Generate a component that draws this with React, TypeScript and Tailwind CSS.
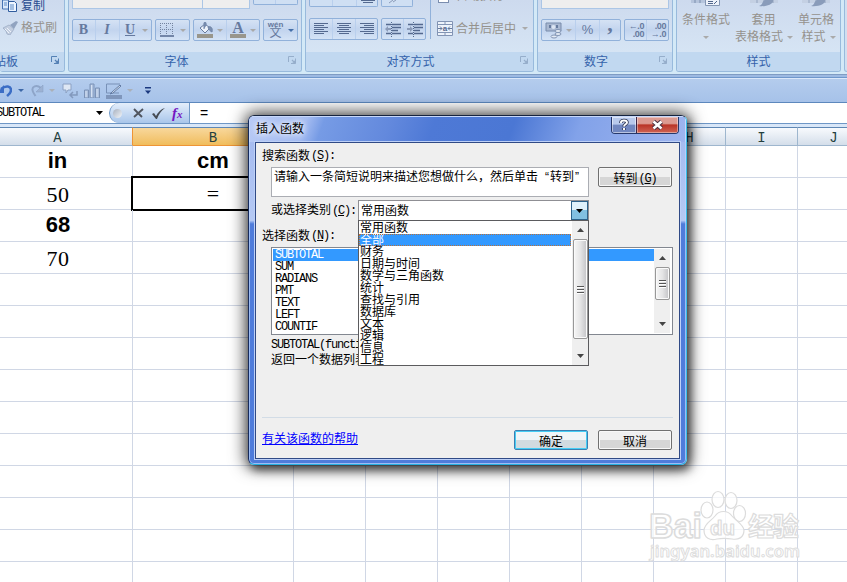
import React from "react";

const CJK = "font-['Liberation_Sans','Noto_Sans_CJK_SC',sans-serif]";
const MONO = "font-['Liberation_Mono',monospace] text-[12px] tracking-[-1.2px]";

function Caret({ className = "" }: { className?: string }) {
  return (
    <svg className={"h-[3px] w-[6px] shrink-0 " + className} viewBox="0 0 6 3">
      <path d="M0 0h6L3 3z" fill="currentColor" />
    </svg>
  );
}

function Launcher({ className }: { className: string }) {
  return (
    <svg className={"h-[9px] w-[9px] shrink-0 " + className} viewBox="0 0 9 9" fill="none" stroke="currentColor">
      <path d="M.5 6V.5H6" />
      <path d="M7.5 2.500V7.500H3" />
      <path d="M4 4l3 3M7 4.500V7H4.500" strokeWidth="1.200" />
    </svg>
  );
}

function Group({
  width,
  label,
  labelClass = "justify-center",
  launcher,
  launcherClass = "text-[#96aecb]",
  children,
}: {
  width: string;
  label: string;
  labelClass?: string;
  launcher?: boolean;
  launcherClass?: string;
  children?: React.ReactNode;
}) {
  return (
    <div className={"flex h-[72px] shrink-0 flex-col overflow-hidden rounded-b-[3px] border border-t-0 border-[#98badc] bg-linear-to-b from-[#cddaee] to-[#d9e8f6] " + width}>
      <div className="flex h-[52px] shrink-0 flex-col">{children}</div>
      <div className={"relative flex h-[19px] shrink-0 items-center bg-[#c1d8f0] pt-px text-[12px] leading-[18px] whitespace-nowrap text-[#3563ab] " + labelClass}>
        <span>{label}</span>
        {launcher && (
          <span className="absolute top-[4px] right-[4px]">
            <Launcher className={launcherClass} />
          </span>
        )}
      </div>
    </div>
  );
}

function Segs({ width, children }: { width: string; children: React.ReactNode }) {
  return (
    <div className={"flex h-[22px] shrink-0 divide-x divide-[#b9cfed] overflow-hidden rounded-[2px] border border-[#91b1da] bg-linear-to-b from-[#d5e2f4] via-[#c2d4ee] to-[#d4e3f6] text-[#66799e] " + width}>
      {children}
    </div>
  );
}

function Lines({ kind }: { kind: "left" | "center" | "right" }) {
  const widths = [14, 10, 14, 10, 14, 10];
  return (
    <svg className="h-[12px] w-[14px]" viewBox="0 0 14 12" stroke="#54698f">
      {widths.map((w, i) => {
        const x = kind === "left" ? 0 : kind === "center" ? (14 - w) / 2 : 14 - w;
        return <path key={i} d={`M${x} ${i * 2 + 0.5}h${w}`} />;
      })}
    </svg>
  );
}

function Indent({ out }: { out?: boolean }) {
  return (
    <svg className="h-[15px] w-[16px]" viewBox="0 0 16 15">
      <path d="M1 2.500h5M7 2.500h9M7 5.500h9M7 8.500h6M7 11.500h9M1 11.500h5" stroke="#54698f" strokeWidth="1.300" />
      <path d="M6.500 0v15" stroke="#54698f" strokeDasharray="1 1" />
      <path d={out ? "M0 7l3-3v2h3v2H3v2z" : "M6 7L3 4v2H0v2h3v2z"} fill="#8b9bb8" />
    </svg>
  );
}

function Ribbon() {
  return (
    <div className="flex h-[78px] shrink-0 flex-col bg-[#d3e9f7]">
      <div className="flex h-[74px] gap-[3px]">
        <Group width="w-[65px] border-l-0" label="贴板" labelClass="justify-start -ml-[6px]" launcher launcherClass="text-[#5481b5]">
          <div className="flex h-[16px] items-start pl-[7px] text-[12px] leading-[12px] text-[#294b8e]">
            <svg className="-ml-[5px] h-[13px] w-[16px]" viewBox="0 0 16 13">
              <path d="M.5 0h6v9h-6z" fill="#d9e8fb" stroke="#4774b4" />
              <path d="M6.500 1.500h6l2 2v8h-8z" fill="#edf5ff" stroke="#315d9e" />
              <path d="M2 3h3M2 5h3M8 5h4M8 7h4M8 9h4" stroke="#5c8ac5" />
            </svg>
            <span className="ml-[3px]">复制</span>
          </div>
          <div className="flex h-[24px] items-center pl-[3px] text-[12px] text-[#95928d]">
            <svg className="h-[14px] w-[16px]" viewBox="0 0 16 14">
              <path d="M0 7l6-3 5 4-4 6-3-1-1-3z" fill="#c3cee0" stroke="#98a8c2" strokeWidth=".7" />
              <path d="M7 4l6-4 2 1-4 7z" fill="#91a3c0" />
              <path d="M2 8l4 4M4 7l4 4" stroke="#eef3fa" />
            </svg>
            <span className="ml-[2px]">格式刷</span>
          </div>
        </Group>

        <Group width="w-[234px]" label="字体" labelClass="justify-center pr-[17px]" launcher>
          <div className="flex h-[19px] items-start pl-[3px]">
            <div className="h-[9px] w-[131px] border border-t-0 border-[#abc6e6] bg-[#eeeeee]" />
            <div className="h-[9px] w-[47px] border border-t-0 border-l-0 border-[#abc6e6] bg-[#eeeeee]" />
            <div className="ml-[3px] flex h-[5px] w-[45px] divide-x divide-[#b9cfed] rounded-b-[2px] border border-t-0 border-[#91b1da] bg-[#cfdff3]">
              <span className="w-[22px]" />
              <span />
            </div>
          </div>
          <div className="flex gap-[3px] pl-[3px] font-['Liberation_Serif',serif] text-[14px] leading-[20px] font-bold">
            <Segs width="w-[80px]">
              <span className="w-[23px] pr-px text-center">B</span>
              <span className="w-[24px] pr-px text-center italic">I</span>
              <span className="flex flex-1 items-center justify-between pr-[3px] pl-[5px]">
                <u>U</u>
                <Caret className="text-[#a9a9a9]" />
              </span>
            </Segs>
            <Segs width="w-[35px]">
              <span className="flex flex-1 items-center justify-between pr-[3px] pl-[4px]">
                <svg className="h-[14px] w-[14px]" viewBox="0 0 14 14">
                  <path d="M.5 0v12M6.500 0v12M12.500 0v12M0 .5h14M0 6.500h14" stroke="#73839f" strokeDasharray="1 1" />
                  <path d="M0 13h14" stroke="#54698f" strokeWidth="1.500" />
                </svg>
                <Caret className="text-[#a9a9a9]" />
              </span>
            </Segs>
            <Segs width="w-[67px]">
              <span className="flex w-[33px] items-center justify-between px-[3px]">
                <svg className="h-[16px] w-[17px]" viewBox="0 0 17 16">
                  <path d="M3 6l5-4 5 4-5 5z" fill="#edf2fa" stroke="#687b9d" />
                  <path d="M7 7V1c0-1 2-1 2 0v3M11 5c3-1 5 1 4 5-2-1-3-2-4-5" fill="#7b8fb1" stroke="#7185a7" />
                  <path d="M0 12h16v4H0z" fill="#99968c" />
                </svg>
                <Caret className="text-[#a9a9a9]" />
              </span>
              <span className="flex flex-1 items-center justify-between pr-[3px] pl-[3px]">
                <span className="flex w-[16px] flex-col items-center border-b-[4px] border-[#99968c] text-[16px] leading-[12px]">A</span>
                <Caret className="text-[#a9a9a9]" />
              </span>
            </Segs>
            <Segs width="w-[35px]">
              <span className="flex flex-1 items-center justify-between px-[3px]">
                <span className={"flex h-[18px] w-[17px] flex-col items-center text-[8px] leading-[7px] font-bold " + CJK}>
                  <span>wén</span>
                  <span className="text-[12px] leading-[11px] font-normal">文</span>
                </span>
                <Caret className="text-[#456fa9]" />
              </span>
            </Segs>
          </div>
        </Group>

        <Group width="w-[229px]" label="对齐方式" labelClass="justify-center pr-[18px]" launcher>
          <div className="flex h-[52px] pl-[3px]">
            <div className="flex w-[117px] flex-col">
              <div className="flex h-[18px] items-start gap-[3px]">
                <div className="flex h-[7px] w-[69px] divide-x divide-[#b9cfed] rounded-b-[2px] border border-t-0 border-[#91b1da] bg-[#cfdff3]">
                  <span className="w-[23px]" />
                  <span className="w-[24px]" />
                  <svg className="ml-[4px] h-[4px] w-[14px]" viewBox="0 0 14 4">
                    <path d="M0 .5h14M2 2.500h10" stroke="#54698f" />
                  </svg>
                </div>
                <div className="h-[7px] w-[32px] rounded-b-[2px] border border-t-0 border-[#91b1da] bg-[#cfdff3]">
                  <svg className="ml-[7px] h-[4px] w-[8px]" viewBox="0 0 8 4">
                    <path d="M0 3l4-3M4 2l3-2" stroke="#8b9bb8" />
                  </svg>
                </div>
              </div>
              <div className="flex gap-[3px]">
                <Segs width="w-[69px]">
                  <span className="flex w-[23px] items-center justify-center"><Lines kind="left" /></span>
                  <span className="flex w-[23px] items-center justify-center"><Lines kind="center" /></span>
                  <span className="flex flex-1 items-center justify-center"><Lines kind="right" /></span>
                </Segs>
                <Segs width="w-[45px]">
                  <span className="flex w-[22px] items-center justify-center"><Indent out /></span>
                  <span className="flex flex-1 items-center justify-center"><Indent /></span>
                </Segs>
              </div>
            </div>
            <div className="ml-[4px] h-[39px] w-px bg-[#91b1da]" />
            <div className="ml-[6px] flex flex-col text-[12px] text-[#95928d]">
              <div className="flex h-[19px] items-start">
                <div className="ml-[1px] h-[3px] w-[11px] border border-t-0 border-[#7a8dae] bg-white" />
                <span className="-mt-[10px] ml-[7px] leading-[12px]">自动换行</span>
              </div>
              <div className="flex h-[19px] items-center">
                <svg className="h-[15px] w-[16px]" viewBox="0 0 16 15">
                  <path d="M.5.5h15v14H.5z" fill="#edf3fb" stroke="#8294b4" />
                  <path d="M0 3.500h16M0 11.500h16M8 0v4M8 11v4" stroke="#8294b4" />
                  <path d="M1 7.500h4M11 7.500h4M3 5.500l2 2-2 2M13 5.500l-2 2 2 2" stroke="#667a9d" fill="none" />
                  <text x="8" y="10" textAnchor="middle" fontSize="8" fontFamily="Liberation Sans" fontWeight="bold" fill="#52678c">a</text>
                </svg>
                <span className="ml-[3px]">合并后居中</span>
                <Caret className="ml-[6px] text-[#aaa]" />
              </div>
            </div>
          </div>
        </Group>

        <Group width="w-[136px]" label="数字" labelClass="justify-center pr-[18px]" launcher>
          <div className="flex h-[19px] items-start pl-[3px]">
            <div className="h-[9px] w-[128px] border border-t-0 border-[#abc6e6] bg-[#eeeeee]" />
          </div>
          <div className="flex gap-[3px] pl-[3px]">
            <Segs width="w-[80px]">
              <span className="flex w-[34px] items-center justify-between px-[3px]">
                <svg className="h-[17px] w-[17px]" viewBox="0 0 17 17">
                  <path d="M1 1h15v8H1z" fill="#a9b8d1" stroke="#788cac" />
                  <path d="M4 3h2v3H4zM11 3h2v3h-2z" fill="#677b9e" />
                  <circle cx="8.500" cy="5" r="2" fill="#dce5f2" />
                  <ellipse cx="13" cy="9" rx="3" ry="1.500" fill="#e3eaf4" stroke="#8295b4" />
                  <ellipse cx="13" cy="12" rx="3" ry="1.500" fill="#e3eaf4" stroke="#8295b4" />
                  <ellipse cx="9" cy="14.500" rx="3" ry="1.500" fill="#e3eaf4" stroke="#8295b4" />
                </svg>
                <Caret className="text-[#aaa]" />
              </span>
              <span className="w-[24px] text-center text-[13px] leading-[20px]">%</span>
              <span className="flex-1 text-center font-['Liberation_Serif',serif] text-[22px] leading-[8px] font-bold">,</span>
            </Segs>
            <Segs width="w-[45px]">
              <span className="flex w-[22px] flex-col pt-[2px] pr-[2px] text-right text-[9px] leading-[8px] font-bold tracking-[-0.4px]">
                <span>←.0</span>
                <span>.00</span>
              </span>
              <span className="flex flex-1 flex-col pt-[2px] pr-[2px] text-right text-[9px] leading-[8px] font-bold tracking-[-0.4px]">
                <span>.00</span>
                <span>→.0</span>
              </span>
            </Segs>
          </div>
        </Group>

        <Group width="w-[165px]" label="样式">
          <div className="flex h-[52px] pl-[5px] text-center text-[12px] leading-[17px] whitespace-nowrap text-[#95928d]">
            <div className="flex w-[48px] flex-col items-center">
              <svg className="h-[12px] w-[30px]" viewBox="0 0 30 12">
                <path d="M0 0h14v3H0z" fill="#b5c4dc" />
                <path d="M4 0v3M9 0v3" stroke="#7b8fae" />
                <path d="M14.500-1h14v6.500h-14z" fill="#edf2fa" stroke="#8496b3" />
                <path d="M17 1.500h5M17 3.500h5M23 4l3-3" stroke="#52678c" />
              </svg>
              <span>条件格式</span>
              <Caret className="mt-[7px] text-[#aaa]" />
            </div>
            <div className="ml-[5px] flex w-[57px] flex-col items-center">
              <svg className="h-[12px] w-[30px]" viewBox="0 0 30 12">
                <path d="M1 0h28v3H1z" fill="#c4d0e3" />
                <path d="M8 0v3M15 0v3M24 0v3" stroke="#93a4bf" />
                <path d="M10 6c4-1 3-5 6-6h8c1 4-7 7-14 6z" fill="#8a9cba" />
              </svg>
              <span>套用</span>
              <span className="flex w-[57px] items-center gap-[4px]">表格格式<Caret className="text-[#aaa]" /></span>
            </div>
            <div className="ml-[3px] flex w-[42px] flex-col items-center">
              <svg className="h-[12px] w-[30px]" viewBox="0 0 30 12">
                <path d="M1 0h28v3H1z" fill="#c4d0e3" />
                <path d="M8 0v3M15 0v3M24 0v3" stroke="#93a4bf" />
                <path d="M10 6c4-1 3-5 6-6h8c1 4-7 7-14 6z" fill="#8a9cba" />
              </svg>
              <span>单元格</span>
              <span className="flex items-center gap-[4px] pl-[5px]">样式<Caret className="text-[#aaa]" /></span>
            </div>
          </div>
        </Group>
        <div className="h-[72px] w-[12px] shrink-0 rounded-b-[3px] border border-t-0 border-[#98badc] bg-[#d1dfef]" />
      </div>
      <div className="h-px bg-[#7f9cc3]" />
      <div className="h-[2px] bg-[#9dbae2]" />
      <div className="h-px bg-[#6f98cc]" />
    </div>
  );
}

function QuickAccess() {
  return (
    <div className="flex h-[25px] shrink-0 items-center border-t border-b border-t-[#dbe8fa] border-b-[#5d88bd] bg-linear-to-b from-[#b4cced] to-[#a6c2e9]">
      <svg className="h-[14px] w-[12px] shrink-0" viewBox="0 0 12 14">
        <path d="M1 5c5-4 10-3 10 1 0 3-2 4-4 6" fill="none" stroke="#3b6dc5" strokeWidth="2.500" />
        <path d="M4 1v8H-3z" fill="#3b6dc5" />
      </svg>
      <Caret className="ml-[6px] text-[#3d68a7]" />
      <svg className="ml-[7px] h-[13px] w-[13px] shrink-0" viewBox="0 0 13 13">
        <path d="M10 4C5 0 1 3 1.500 6c.3 3 2 4 3 6" fill="none" stroke="#8ea5c9" strokeWidth="2" />
        <path d="M12 1v7H5z" fill="#9db2d3" stroke="#879dc1" strokeWidth=".5" />
      </svg>
      <Caret className="ml-[5px] text-[#aab0b8]" />
      <svg className="ml-[7px] h-[16px] w-[16px] shrink-0" viewBox="0 0 16 16">
        <path d="M1 1h8v6H6l-2 3V7H1z" fill="#dee7f4" stroke="#8ca1c3" />
        <path d="M15 8v4H9M11 9l-3 3 3 3" fill="none" stroke="#8399bd" strokeWidth="1.500" />
      </svg>
      <svg className="ml-[6px] h-[15px] w-[16px] shrink-0" viewBox="0 0 16 15">
        <path d="M.5 7h4v8h-4zM6 1h4v14H6zM11.500 5h4v10h-4z" fill="#adc0de" stroke="#7b92b7" />
        <path d="M2 8v6M7.500 2v12M13 6v8" stroke="#d5e1f2" />
      </svg>
      <svg className="ml-[6px] h-[16px] w-[16px] shrink-0" viewBox="0 0 16 16">
        <path d="M14 1H.5v9H13" fill="none" stroke="#7891b7" />
        <path d="M14 2L6 9l-2 2 3-1 8-7z" fill="#dde6f3" stroke="#637ca4" />
        <path d="M0 12h16v4H0z" fill="#7f96bb" />
      </svg>
      <Caret className="ml-[5px] text-[#aab0b8]" />
      <svg className="ml-[12px] h-[7px] w-[6px] shrink-0" viewBox="0 0 6 7">
        <path d="M0 0h6v1.500H0zM0 3.500h6L3 7z" fill="#1b397f" />
      </svg>
    </div>
  );
}

function FormulaBar() {
  return (
    <div className="flex h-[21px] shrink-0 items-center overflow-hidden border-b border-[#6f97c6] bg-white">
      <span className={"-ml-[4px] w-[49px] text-black " + MONO}>SUBTOTAL</span>
      <svg className="ml-[51px] h-[4px] w-[7px]" viewBox="0 0 7 4"><path d="M0 0h7L3.500 4z" /></svg>
      <div className="ml-[6px] flex h-[20px] w-[81px] items-center rounded-l-full border border-y-0 border-[#7098c7] bg-linear-to-b from-[#e4eefb] to-[#a9c6ea]">
        <span className="ml-[3px] h-[9px] w-[9px] rounded-full bg-linear-to-br from-[#a8b1bf] to-[#f3f6fa]" />
        <svg className="ml-[11px] h-[10px] w-[11px]" viewBox="0 0 11 10">
          <path d="M1 1l8 8M10 1L1 9" stroke="#50555f" strokeWidth="1.900" />
        </svg>
        <svg className="ml-[8px] h-[11px] w-[13px]" viewBox="0 0 13 11">
          <path d="M0 6l2-1 2 3c2-4 5-7 9-8-4 3-6 6-8 11H4z" fill="#454b54" />
        </svg>
        <span className="ml-[7px] font-['Liberation_Serif',serif] text-[15px] leading-[18px] font-bold text-[#7516c1] italic">
          f<span className="text-[11px]">x</span>
        </span>
      </div>
      <span className="ml-[10px] text-[14px] leading-[19px]">=</span>
    </div>
  );
}

const columns = [
  { name: "A", w: "w-[133px]" },
  { name: "B", w: "w-[161px]" },
  { name: "C", w: "w-[72px]" },
  { name: "D", w: "w-[72px]" },
  { name: "E", w: "w-[72px]" },
  { name: "F", w: "w-[72px]" },
  { name: "G", w: "w-[72px]" },
  { name: "H", w: "w-[72px]" },
  { name: "I", w: "w-[72px]" },
  { name: "J", w: "w-[72px]" },
];

const cells: Record<string, { text: string; cls: string }> = {
  "0A": { text: "in", cls: "font-['Liberation_Sans',sans-serif] font-bold pr-[17px] pb-px" },
  "0B": { text: "cm", cls: "font-['Liberation_Sans',sans-serif] font-bold pb-px" },
  "1A": { text: "50", cls: "font-['Liberation_Serif',serif] pr-[16px] pt-[3px] tracking-[0.6px]" },
  "1B": { text: "=", cls: "font-['Liberation_Serif',serif]" },
  "2A": { text: "68", cls: "font-['Liberation_Sans',sans-serif] font-bold pr-[16px] pb-px" },
  "3A": { text: "70", cls: "font-['Liberation_Serif',serif] pr-[16px] pt-[3px] tracking-[0.6px]" },
};

function Sheet() {
  return (
    <div className="flex flex-col">
      <div className="flex h-[22px] w-[870px] shrink-0 border-t-[3px] border-[#d9e7f8] font-['Liberation_Mono',monospace] text-[14px] text-[#24403f]">
        {columns.map((c) => (
          <div
            key={c.name}
            className={
              "flex h-[19px] shrink-0 items-center justify-center border-t border-r border-b border-t-[#5f87b4] pt-[3px] leading-[14px] " +
              c.w +
              (c.name === "A" ? " pr-[17px] border-r-[#ee9436] border-b-[#9eb6ce] bg-linear-to-b from-[#f8fafd] to-[#d4deea]" : "") +
              (c.name === "B" ? " border-r-[#ee9436] border-b-[#ee9436] bg-linear-to-b from-[#f8d79b] to-[#f0bd5b]" : "") +
              (c.name !== "A" && c.name !== "B" ? " border-r-[#9eb6ce] border-b-[#9eb6ce] bg-linear-to-b from-[#f8fafd] to-[#d4deea]" : "")
            }
          >
            {c.name}
          </div>
        ))}
      </div>
      {Array.from({ length: 14 }, (_, r) => (
        <div key={r} className="flex h-[32px] w-[870px] shrink-0">
          {columns.map((c) => {
            const cell = cells[r + c.name];
            return (
              <div key={c.name} className={"relative shrink-0 border-r border-b border-[#d0d7e5] " + c.w}>
                {cell && (
                  <div className={"flex h-[31px] items-center justify-center text-[22px] leading-[22px] text-black " + cell.cls}>{cell.text}</div>
                )}
                {r === 1 && c.name === "B" && <div className="absolute -top-[2px] -right-[2px] -bottom-[2px] -left-[2px] border-2 border-black" />}
              </div>
            );
          })}
        </div>
      ))}
    </div>
  );
}

function Key({ k, colon }: { k: string; colon?: boolean }) {
  return (
    <span className={"ml-px " + MONO}>
      (<u>{k}</u>){colon && ":"}
    </span>
  );
}

function Button({ children, primary }: { children: React.ReactNode; primary?: boolean }) {
  return (
    <div
      className={
        "mr-px flex h-[20px] w-[74px] shrink-0 items-center justify-center rounded-[2px] border pt-[3px] text-[12px] leading-[12px] " +
        (primary
          ? "border-[#3c7fb1] bg-linear-to-b from-[#eff5f8] from-50% to-[#d2dbe0] to-50% shadow-[inset_0_0_0_1px_#45cdf5]"
          : "border-[#707070] bg-linear-to-b from-[#f0f0f0] from-50% to-[#d6d6d6] to-50% shadow-[inset_0_0_0_1px_#f8f8f8]")
      }
    >
      {children}
    </div>
  );
}

function ScrollBar({ thumb }: { thumb: string }) {
  return (
    <div className="flex w-[16px] shrink-0 flex-col items-center bg-[#efefef] py-[7px]">
      <svg className="h-[4px] w-[7px] shrink-0" viewBox="0 0 7 4"><path d="M0 4h7L3.500 0z" fill="#444" /></svg>
      <div className={"mt-[7px] flex w-[15px] shrink-0 items-center justify-center rounded-[2px] border border-[#989898] bg-linear-to-r from-[#f6f6f6] via-[#e4e4e5] to-[#c3c3c6] shadow-[inset_0_0_0_1px_#fafafa] " + thumb}>
        <svg className="h-[9px] w-[7px]" viewBox="0 0 7 9">
          <path d="M0 1.500h7M0 4.500h7M0 7.500h7" stroke="#555" />
          <path d="M0 2.500h7M0 5.500h7M0 8.500h7" stroke="#fff" />
        </svg>
      </div>
      <span className="flex-1" />
      <svg className="h-[4px] w-[7px] shrink-0" viewBox="0 0 7 4"><path d="M0 0h7L3.500 4z" fill="#444" /></svg>
    </div>
  );
}

const functions = ["SUBTOTAL", "SUM", "RADIANS", "PMT", "TEXT", "LEFT", "COUNTIF"];
const categories = ["常用函数", "全部", "财务", "日期与时间", "数学与三角函数", "统计", "查找与引用", "数据库", "文本", "逻辑", "信息", "工程"];

function Dialog() {
  return (
    <div className="absolute top-[115px] left-[248px] h-[350px] w-[439px] rounded-[6px] shadow-[0_0_16px_3px_rgba(0,0,0,0.7),3px_5px_9px_rgba(0,0,0,0.5)]">
      <div className="flex h-full flex-col overflow-hidden rounded-[6px] border border-t-[#17243f] border-r-[#37bde9] border-b-[#25afe0] border-l-[#172b5c] bg-linear-to-b from-[#a4baf0] from-5% via-[#b5c9f4] via-30% to-[#4f7cdb] to-31% px-[6px] pb-[6px] shadow-[inset_0_0_0_1px_rgba(190,215,255,0.7)]">
        <div className="-mx-[6px] flex h-[26px] shrink-0 items-start justify-between border border-b-0 border-[#c8d9fb] bg-[linear-gradient(110deg,#b8caf5_0%,#a5bcf1_13%,#769be5_17%,#6389dd_32%,#4e79d6_42%,#4b77d4_60%,#82a2e9_75%,#9fb5ef_100%)] pr-[6px] pl-[6px]">
          <span className="mt-[4px] rounded-full text-[12px] leading-[16px] text-black [text-shadow:0_0_6px_white,0_0_6px_white]">插入函数</span>
          <div className="flex h-[17px] w-[68px] overflow-hidden rounded-b-[4px] border border-t-0 border-[#26386b]">
            <div className="flex w-[25px] items-center justify-center border-r border-[#3c2444] bg-linear-to-b from-[#b8c9ec] from-45% to-[#7187c0] to-50% shadow-[inset_0_0_0_1px_rgba(255,255,255,0.5)]">
              <svg className="h-[14px] w-[12px]" viewBox="0 0 12 14">
                <path d="M3 5V4C3 2 9 2 9 4.500 9 6.500 6 6 6 8.500M6 10v2" fill="none" stroke="#333b58" strokeWidth="3.600" />
                <path d="M3 5V4C3 2 9 2 9 4.500 9 6.500 6 6 6 8.500M6 10v2" fill="none" stroke="#fff" strokeWidth="1.900" />
              </svg>
            </div>
            <div className="flex flex-1 items-center justify-center bg-linear-to-b from-[#dc9a91] from-40% via-[#b93327] via-50% to-[#cf6354] shadow-[inset_0_0_0_1px_rgba(255,255,255,0.4)]">
              <svg className="h-[12px] w-[13px]" viewBox="0 0 13 12">
                <path d="M2.500 2.500l8 7M10.500 2.500l-8 7" stroke="#4a3242" strokeWidth="4.500" />
                <path d="M2.500 2.500l8 7M10.500 2.500l-8 7" stroke="#fff" strokeWidth="2.500" />
              </svg>
            </div>
          </div>
        </div>
        <div className="flex h-[317px] shrink-0 flex-col border border-[#304a86] bg-[#efefef] pr-[6px] pl-[6px] text-[12px] leading-[12px] text-black shadow-[0_0_0_1px_#bdd0f7]">
          <div className="mt-[7px] flex h-[12px] shrink-0 items-center">搜索函数<Key k="S" colon /></div>
          <div className="mt-[5px] flex shrink-0 justify-between pl-[9px]">
            <div className="h-[30px] w-[318px] overflow-hidden border border-[#abadb3] bg-white pt-[2px] pl-[2px] leading-[14px] whitespace-nowrap">
              请输入一条简短说明来描述您想做什么，然后单击<span className="inline-block w-[12px] pr-px text-right">“</span>转到<span className="pl-px">”</span>
            </div>
            <Button>转到<Key k="G" /></Button>
          </div>
          <div className="mt-[3px] flex h-[21px] shrink-0 items-center pl-[9px]">
            <span className="w-[87px] whitespace-nowrap">或选择类别<Key k="C" colon /></span>
            <div className="relative flex h-[21px] w-[231px] items-center justify-between border border-[#8f8f94] bg-white pl-[2px]">
              <span>常用函数</span>
              <div className="flex h-[19px] w-[17px] items-center justify-center border border-[#2c628b] bg-linear-to-b from-[#dff1fb] from-45% to-[#81c0e2] to-50%">
                <svg className="h-[4px] w-[7px]" viewBox="0 0 7 4"><path d="M0 0h7L3.500 4z" /></svg>
              </div>
              <div className="absolute top-[19px] -left-px z-10 flex h-[146px] w-[231px] border border-[#5b5b5e] bg-white">
                <div className="flex flex-1 flex-col pt-px">
                  {categories.map((c, i) => (
                    <div key={c} className={"h-[12px] shrink-0 pl-px leading-[12px] whitespace-nowrap " + (i === 1 ? "bg-[#3399ff] text-white outline-1 -outline-offset-1 outline-dotted outline-[#b8713b]" : "")}>
                      {c}
                    </div>
                  ))}
                </div>
                <div className="ml-px flex"><ScrollBar thumb="h-[100px]" /></div>
              </div>
            </div>
          </div>
          <div className="mt-[9px] flex h-[12px] shrink-0 items-center">选择函数<Key k="N" colon /></div>
          <div className="mt-[5px] ml-[9px] flex h-[88px] w-[402px] shrink-0 border border-[#828790] bg-white p-px">
            <div className={"flex flex-1 flex-col " + MONO}>
              {functions.map((f, i) => (
                <div key={f} className={"h-[12px] shrink-0 pl-[2px] leading-[13px] " + (i === 0 ? "bg-[#3399ff] text-white" : "")}>{f}</div>
              ))}
            </div>
            <div className="mr-px flex"><ScrollBar thumb="h-[33px]" /></div>
          </div>
          <div className={"mt-[3px] ml-[9px] h-[15px] shrink-0 leading-[14px] whitespace-nowrap " + MONO}>SUBTOTAL(function_num,ref1,...)</div>
          <div className="ml-[9px] h-[15px] shrink-0 leading-[15px] whitespace-nowrap">返回一个数据列表</div>
          <div className="mt-[49px] h-px shrink-0 bg-[#d2dce6]" />
          <div className="mt-[12px] flex h-[20px] shrink-0 items-center">
            <a className="mb-[3px] text-[#0000ff] underline">有关该函数的帮助</a>
            <span className="flex-1" />
            <Button primary>确定</Button>
            <span className="w-[9px]" />
            <Button>取消</Button>
          </div>
        </div>
      </div>
    </div>
  );
}

function Watermark() {
  return (
    <svg className="absolute top-[488px] left-[646px] h-[78px] w-[160px]" viewBox="0 0 160 78" fill="#fff" fillOpacity=".75" stroke="#dcdcdc" strokeWidth="1.200" strokeLinejoin="round">
      <ellipse cx="61" cy="22" rx="6" ry="8" />
      <ellipse cx="72" cy="11.500" rx="6" ry="8" />
      <ellipse cx="85" cy="12.500" rx="6" ry="8" />
      <ellipse cx="93.500" cy="25.500" rx="6" ry="8" />
      <path d="M69 28c4-6 13-6 17 0 4 5 11 8 12 14 0 8-6 10-12 9-6-1-10-1-15 0-7 2-13-1-13-9 1-7 7-9 11-14z" />
      <text x="3" y="50" fontFamily="Liberation Sans" fontWeight="bold" fontSize="35" strokeWidth="1.600" textLength="53" lengthAdjust="spacingAndGlyphs">Bai</text>
      <text x="64" y="47" fontFamily="Liberation Sans" fontWeight="bold" fontSize="20" textLength="25" lengthAdjust="spacingAndGlyphs">du</text>
      <text x="102" y="48" fontFamily="Noto Sans CJK SC" fontWeight="bold" fontSize="26" textLength="51">经验</text>
      <text x="4" y="69" fontFamily="Noto Sans" fontSize="16" fontWeight="600" strokeWidth=".9" textLength="150" lengthAdjust="spacingAndGlyphs">jingyan.baidu.com</text>
    </svg>
  );
}

export default function App() {
  return (
    <div className={"relative flex h-[582px] w-[847px] flex-col overflow-hidden bg-white " + CJK}>
      <Ribbon />
      <QuickAccess />
      <FormulaBar />
      <div className="h-[458px] shrink-0 overflow-hidden"><Sheet /></div>
      <Watermark />
      <Dialog />
    </div>
  );
}
